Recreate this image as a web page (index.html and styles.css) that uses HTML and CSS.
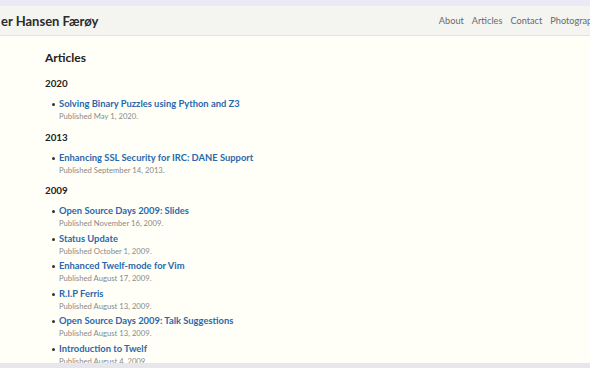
FILE: index.html
```html
<!DOCTYPE html>
<html lang="en">
<head>
    <meta charset="UTF-8">
    <meta name="viewport" content="width=device-width, initial-scale=1.0">
    <title>Articles</title>
    <link rel="stylesheet" href="styles.css">
</head>
<body>

<div class="frame-top"></div>

<header class="site-header">
    <div class="header-inner">
        <a class="site-title" href="#">er Hansen Færøy</a>
        <nav class="site-nav">
            <a href="#">About</a>
            <a href="#">Articles</a>
            <a href="#">Contact</a>
            <a href="#">Photography</a>
        </nav>
    </div>
</header>

<main class="content">
    <h1>Articles</h1>

    <h2>2020</h2>
    <ul class="posts">
        <li><a href="#">Solving Binary Puzzles using Python and Z3</a><span class="date">Published May 1, 2020.</span></li>
    </ul>

    <h2>2013</h2>
    <ul class="posts">
        <li><a href="#">Enhancing SSL Security for IRC: DANE Support</a><span class="date">Published September 14, 2013.</span></li>
    </ul>

    <h2>2009</h2>
    <ul class="posts">
        <li><a href="#">Open Source Days 2009: Slides</a><span class="date">Published November 16, 2009.</span></li>
        <li><a href="#">Status Update</a><span class="date">Published October 1, 2009.</span></li>
        <li><a href="#">Enhanced Twelf-mode for Vim</a><span class="date">Published August 17, 2009.</span></li>
        <li><a href="#">R.I.P Ferris</a><span class="date">Published August 13, 2009.</span></li>
        <li><a href="#">Open Source Days 2009: Talk Suggestions</a><span class="date">Published August 13, 2009.</span></li>
        <li><a href="#">Introduction to Twelf</a><span class="date">Published August 4, 2009.</span></li>
    </ul>
</main>

<div class="frame-bottom"></div>

</body>
</html>
```

FILE: styles.css
```css
html, body {
    margin: 0;
    padding: 0;
    height: 368px;
    overflow: hidden;
}
body {
    font-family: Lato, 'Noto Sans', sans-serif;
    background-color: #fffff7;
    color: #222;
    position: relative;
}
a {
    text-decoration: none;
}
.frame-top {
    height: 6px;
    background-color: #ece9f6;
}
.site-header {
    background-color: #f4f4f1;
    border-bottom: 1px solid #e2e2de;
    height: 29px;
}
.header-inner {
    width: 602px;
    height: 100%;
    display: flex;
    align-items: center;
    justify-content: space-between;
}
.site-title {
    color: #2b2b2b;
    font-size: 13px;
    font-weight: bold;
    padding-left: 1px;
}
.site-nav {
    display: flex;
    gap: 8px;
    white-space: nowrap;
}
.site-nav a {
    color: #6a6a6a;
    font-size: 9.2px;
}
.content {
    padding: 13px 45px 0;
}
h1 {
    font-size: 12px;
    line-height: 18px;
    margin: 0 0 9px;
    color: #222;
}
h2 {
    font-size: 9.8px;
    line-height: 14px;
    margin: 0 0 8px;
    color: #222;
}
.posts {
    list-style: none;
    margin: 0 0 7.5px;
    padding-left: 14px;
}
.posts li {
    position: relative;
    margin-bottom: 3.5px;
}
.posts li::before {
    content: "";
    position: absolute;
    left: -7px;
    top: 5px;
    width: 3px;
    height: 3px;
    border-radius: 50%;
    background-color: #333;
}
.posts a {
    display: block;
    color: #2a68ad;
    font-size: 9.4px;
    font-weight: bold;
    line-height: 12px;
}
.date {
    display: block;
    color: #8a8a8a;
    font-size: 7.7px;
    line-height: 12px;
}
.frame-bottom {
    position: absolute;
    left: 0;
    right: 0;
    bottom: 0;
    height: 5px;
    background-color: #e6e6ec;
}
```
